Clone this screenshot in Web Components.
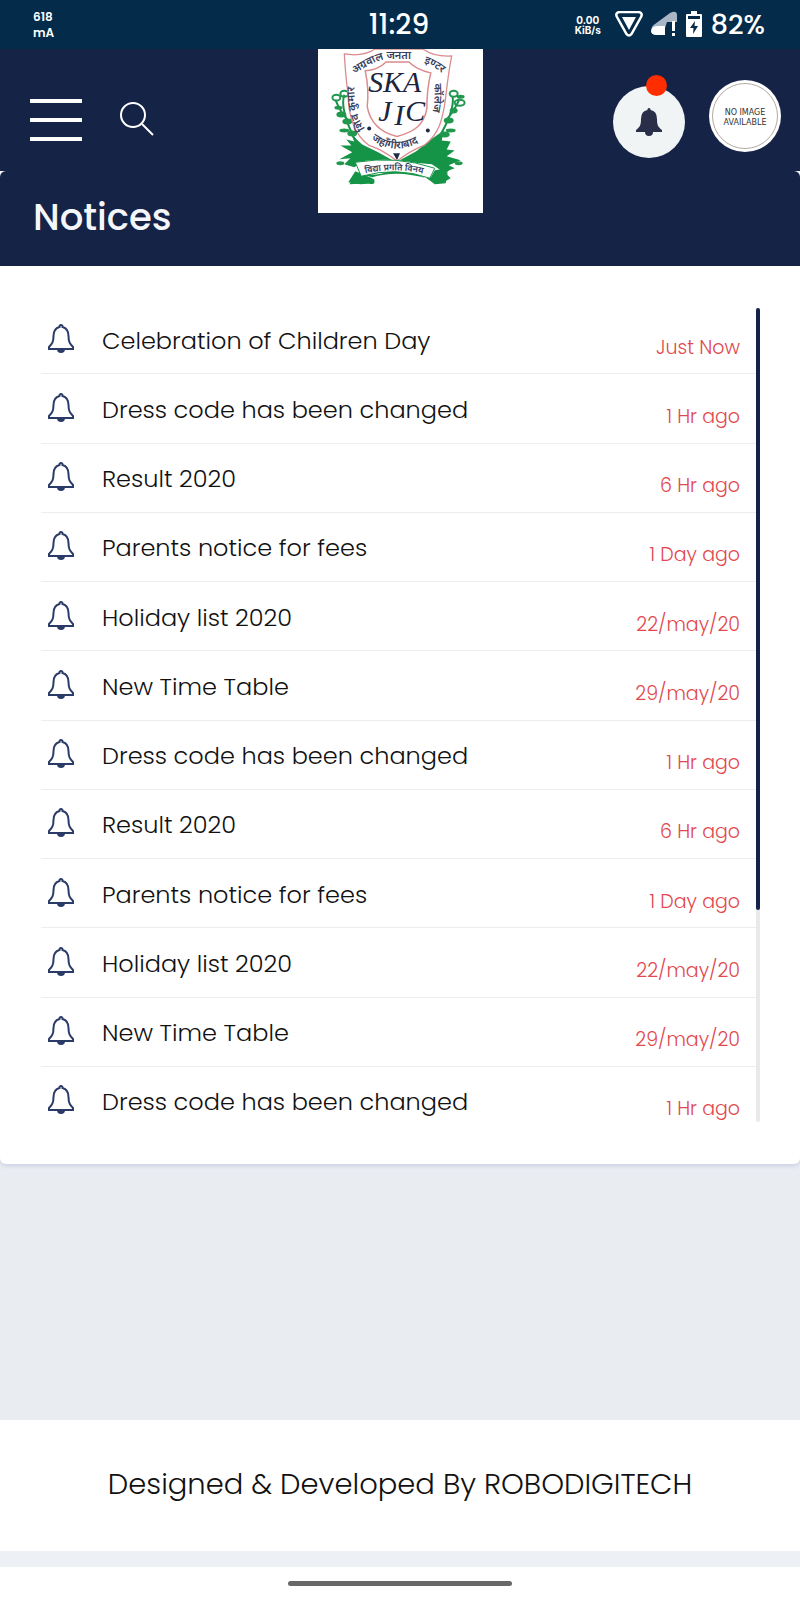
<!DOCTYPE html>
<html lang="en">
<head>
<meta charset="utf-8">
<meta name="viewport" content="width=device-width, initial-scale=1">
<title>Notices</title>
<style>
  body { margin: 0; background: #e9ecf1; font-family: Poppins, Inter, "Noto Sans", sans-serif; color: #111; }
</style>
</head>
<body>
<notice-app></notice-app>
<script>
const define = (name, html, setup) => {
  const template = document.createElement('template');
  template.innerHTML = html;
  customElements.define(name, class extends HTMLElement {
    constructor() {
      super();
      this.attachShadow({ mode: 'open' }).append(template.content.cloneNode(true));
    }
    connectedCallback() { if (setup) setup(this, this.shadowRoot); }
  });
};

define('status-bar', `
<style>
  :host { display: grid; grid-template-columns: 1fr auto 1fr; align-items: center; height: 49px; padding: 0 35px 0 33px; background: #042b49; color: #fff; box-sizing: border-box; }
  .draw { font-size: 12px; line-height: 16px; font-weight: 600; }
  .time { font-size: 28px; line-height: 36px; font-weight: 500; }
  .right { justify-self: end; display: flex; align-items: center; }
  .rate { font-family: Inter, sans-serif; font-size: 10px; line-height: 10px; font-weight: 700; text-align: center; margin-right: 14px; }
  .pct { font-size: 27px; line-height: 36px; font-weight: 500; margin-left: 8px; }
  svg { display: block; }
</style>
<div class="draw">618<br>mA</div>
<div class="time">11:29</div>
<div class="right">
  <div class="rate"><div>0.00</div><div>KiB/s</div></div>
  <svg width="28" height="28" viewBox="0 0 28 28" fill="none"><path d="M4 1H24Q28 2 26 6L16.500 23Q14 26 11.500 23L2 6Q0 2 4 1Z" stroke="#fff" stroke-width="2.500"/><path d="M7 6H21L14 19Z" fill="#fff"/></svg>
  <svg width="28" height="28" viewBox="0 0 28 28" style="margin-left:7px"><path d="M2 19Q1 15 5 13L20 2Q26 -1 27 3V11H21V24H7Q1 24 2 19Z" fill="#a9b6c6"/><path d="M9 15H15V24H7Q1 24 1 20Q1 15 9 15Z" fill="#fff"/><path d="M17 11H28V28H15V17Z" fill="#042b49"/><path d="M22 10H25V20H22ZM22 22H25V25H22Z" fill="#fff"/></svg>
  <svg width="18" height="28" viewBox="0 0 18 28" style="margin-left:7px"><path d="M6 0H12V3H16Q17 3 17 4V25Q17 26 16 26H2Q1 26 1 25V4Q1 3 2 3H6Z" fill="#fff"/><path d="M3 5H15V8H3Z" fill="#042b49"/><path d="M10 10L5 17H8.500L8 23L13 15H9.500Z" fill="#042b49"/></svg>
  <div class="pct">82%</div>
</div>`);

define('school-crest', `
<style>
  :host { display: block; background: #fff; }
  svg { display: block; width: 100%; height: 100%; }
  .in { font-family: "Liberation Serif", serif; font-style: italic; fill: #1d2440; }
  .hi { font-family: "Noto Sans Devanagari", "Noto Sans", sans-serif; font-weight: 600; fill: #39405c; }
</style>
<svg viewBox="0 0 165 165" role="img" aria-label="School crest">
  <g fill="#159447">
    <path d="M33 86L44 96L60 104L78 114L98 103L113 91L126 82L124 92L133 93L129 101L137 102L129 108L143 112L131 117L137 120L126 124L114 116Q79 112 42 115L36 119L26 116L32 110L21 111L34 104L22 97L33 97L28 91L36 93Z"/>
    <path d="M38 124Q56 130 73 122Q92 121 108 130L124 135L133 130L128 125L135 119L117 122L112 131Q80 121 54 129L39 125L31 136L50 135Q58 138 56 131Z"/>
    <path d="M30 134L37 123L54 130L55 135L42 136ZM109 130L130 124L128 135L117 136Z"/>
  </g>
  <path d="M17 51Q22 64 30 72M26 46Q21 60 37 92M142 50Q137 62 128 72M135 48Q137 63 120 91" fill="none" stroke="#159447" stroke-width="2"/>
  <g fill="none" stroke="#22984e" stroke-width="2">
    <ellipse cx="18" cy="49" rx="4" ry="3"/><ellipse cx="26" cy="45" rx="4" ry="3"/><ellipse cx="142" cy="54" rx="5" ry="3"/><ellipse cx="136" cy="45" rx="4" ry="3"/>
  </g>
  <g fill="#22984e">
    <ellipse cx="20" cy="59" rx="4" ry="2"/><ellipse cx="23" cy="66" rx="5" ry="3"/><ellipse cx="29" cy="73" rx="5" ry="3"/><ellipse cx="26" cy="82" rx="5" ry="2"/><ellipse cx="34" cy="85" rx="5" ry="3"/><ellipse cx="22" cy="115" rx="4" ry="2"/>
    <ellipse cx="143" cy="48" rx="4" ry="2"/><ellipse cx="136" cy="62" rx="4" ry="3"/><ellipse cx="131" cy="72" rx="5" ry="3"/><ellipse cx="133" cy="82" rx="5" ry="2"/><ellipse cx="127" cy="86" rx="5" ry="3"/><ellipse cx="141" cy="115" rx="4" ry="2"/>
  </g>
  <path d="M26 5Q45 8 57 0H105Q116 8 134 7Q131 22 128 48C125 72 121 86 106 97Q91 103 79 113Q66 102 51 97C35 86 30 64 30 48Q27 25 26 5Z" fill="#fff" stroke="#dc8b8e" stroke-width="1.300"/>
  <path d="M47 22Q60 21 68 13H91Q99 21 113 24Q109 40 109 60C106 78 94 84 79 88C62 84 52 74 49 58Q51 40 47 22Z" fill="#fff" stroke="#dc8b8e" stroke-width="1.500"/>
  <g class="in" font-size="30"><text x="50" y="43">SKA</text><text x="60" y="72">J<tspan dx="3" dy="4">I</tspan><tspan dx="1" dy="-4">C</tspan></text></g>
  <path id="left" d="M47 80C36 66 35 44 37 29" fill="none"/>
  <path id="top" d="M36 25Q60 10 70 10H104" fill="none"/>
  <path id="top2" d="M106 14Q116 17 129 28" fill="none"/>
  <path id="right" d="M116 35Q119 58 109 80" fill="none"/>
  <path id="low" d="M53 91Q79 110 107 90" fill="none"/>
  <g class="hi" font-size="11">
    <text><textPath href="#left">शिव कुमार</textPath></text>
    <text><textPath href="#top">अग्रवाल जनता</textPath></text>
    <text><textPath href="#top2">इण्टर</textPath></text>
    <text><textPath href="#right">कॉलेज</textPath></text>
    <text><textPath href="#low">जहाँगीराबाद</textPath></text>
  </g>
  <circle cx="51" cy="80" r="2" fill="#222a45"/><circle cx="110" cy="82" r="2" fill="#222a45"/>
  <path d="M75 105H82L79 112Z" fill="#222a45"/>
  <path d="M37 114Q79 107 117 120L112 130Q79 118 43 128Z" fill="#fff" stroke="#159447" stroke-width="1"/>
  <path id="motto" d="M47 125Q79 118 111 127" fill="none"/>
  <text class="hi" font-size="9"><textPath href="#motto">विद्या प्रगति विनय</textPath></text>
</svg>`);

define('app-header', `
<style>
  :host { display: flex; align-items: center; height: 122px; padding: 0 19px 0 30px; background: #152347; box-sizing: border-box; position: relative; }
  button { border: 0; padding: 0; background: none; display: block; cursor: pointer; }
  svg { display: block; }
  .menu { display: flex; flex-direction: column; gap: 15px; width: 52px; margin-top: 20px; }
  .menu i { height: 4px; background: #fff; }
  .search { margin: 18px auto 0 38px; }
  .bell { position: relative; width: 72px; height: 72px; border-radius: 50%; background: #f1f4f5; margin: 24px 24px 0 0; display: grid; place-items: center; }
  .bell b { position: absolute; top: -11px; left: 33px; width: 21px; height: 21px; border-radius: 50%; background: #ff2d00; }
  .avatar { width: 72px; height: 72px; border-radius: 50%; background: #fff; padding: 3px; margin-top: 12px; box-sizing: border-box; }
  .avatar span { display: grid; place-content: center; height: 100%; box-sizing: border-box; border: 1px solid #b5a9a9; border-radius: 50%; padding-top: 3px; font: 8px/10px "DejaVu Sans", sans-serif; color: #333; text-align: center; }
  school-crest { position: absolute; top: 0; left: 50%; width: 165px; height: 164px; margin-left: -82px; z-index: 1; }
</style>
<button class="menu" aria-label="Menu"><i></i><i></i><i></i></button>
<button class="search" aria-label="Search"><svg width="34" height="34" viewBox="0 0 34 34" fill="none" stroke="#fff" stroke-width="2"><circle cx="13" cy="13" r="12"/><path d="M22 22L33 33"/></svg></button>
<school-crest></school-crest>
<button class="bell" aria-label="Notifications"><svg width="28" height="30" viewBox="0 0 28 30" fill="#292e49"><path d="M12.500 2Q14 0 15.500 2V3Q22 4 22 12C22 18 23 20 27 23V25H1V23C5 20 6 18 6 12Q6 4 12.500 3ZM10 25H18Q18 29 14 29Q10 29 10 25Z"/></svg><b></b></button>
<button class="avatar" aria-label="Profile"><span>NO IMAGE<br>AVAILABLE</span></button>`);

define('notice-row', `
<style>
  :host { display: flex; border-bottom: 1px solid #ebedef; box-sizing: border-box; min-height: 69px; }
  :host(:last-child) { border-bottom-color: transparent; }
  a { flex: 1; display: flex; align-items: center; padding: 3px 16px 0 6px; color: #111; text-decoration: none; }
  svg { flex: none; margin-bottom: 4px; }
  .title { flex: 1; margin-left: 27px; font-size: 24px; line-height: 36px; font-weight: 300; }
  time { padding-top: 14px; font-size: 19px; line-height: 28px; font-weight: 300; color: #e2484e; }
</style>
<a href="#">
  <svg width="28" height="30" viewBox="0 0 28 30"><path d="M12.500 3V2Q14 0 15.500 2V3Q21.500 4.500 21.500 12C21.500 18 23 20 26 23V25H2V23C5 20 6.500 18 6.500 12Q6.500 4.500 12.500 3Z" fill="none" stroke="#2b3b68" stroke-width="2"/><path d="M10 25H18Q18 29 14 29Q10 29 10 25Z" fill="#2b3b68"/></svg>
  <span class="title"><slot></slot></span>
  <time></time>
</a>`, (host, root) => { root.querySelector('time').textContent = host.getAttribute('when'); });

define('notice-card', `
<style>
  :host { display: block; background: #fff; border-radius: 6px; box-shadow: 0 2px 4px #cbd0e4; }
  h1 { margin: 0; padding: 18px 33px 21px; background: #152347; color: #f4f6fa; font-size: 37px; line-height: 56px; font-weight: 500; border-radius: 6px 6px 0 0; }
  .body { display: flex; padding: 39px 40px 28px 41px; }
  .list { flex: 1; display: grid; grid-auto-rows: 1fr; min-height: 831px; }
  .track { width: 4px; margin: 3px 0 14px; background: #e9e9eb; border-radius: 2px; }
  .thumb { height: 74%; background: #152347; border-radius: 2px; }
</style>
<h1>Notices</h1>
<div class="body"><div class="list"></div><div class="track"><div class="thumb"></div></div></div>`, (host, root) => {
  const cycle = [['Dress code has been changed', '1 Hr ago'], ['Result 2020', '6 Hr ago'], ['Parents notice for fees', '1 Day ago'], ['Holiday list 2020', '22/may/20'], ['New Time Table', '29/may/20']];
  const notices = [['Celebration of Children Day', 'Just Now'], ...cycle, ...cycle, cycle[0]];
  root.querySelector('.list').append(...notices.map(([title, when]) => {
    const row = document.createElement('notice-row');
    row.textContent = title;
    row.setAttribute('when', when);
    return row;
  }));
});

define('app-footer', `
<style>
  :host { display: block; background: #fff; }
  p { margin: 0; padding: 42px 16px 45px; text-align: center; font-size: 29px; line-height: 44px; font-weight: 300; color: #111; }
  .strip { height: 16px; background: #edf0f4; }
  .nav { height: 33px; display: flex; align-items: center; justify-content: center; }
  .nav i { width: 28%; height: 5px; border-radius: 3px; background: #686868; }
</style>
<p>Designed &amp; Developed By ROBODIGITECH</p>
<div class="strip"></div><div class="nav"><i></i></div>`);

define('notice-app', `
<style>
  :host { display: flex; flex-direction: column; min-height: 100vh; }
  .main { background: linear-gradient(#fff 0 50px, #e9ecf1 0); }
  app-footer { margin-top: auto; }
</style>
<status-bar></status-bar><app-header></app-header>
<div class="main"><notice-card></notice-card></div>
<app-footer></app-footer>`);
</script>
</body>
</html>
